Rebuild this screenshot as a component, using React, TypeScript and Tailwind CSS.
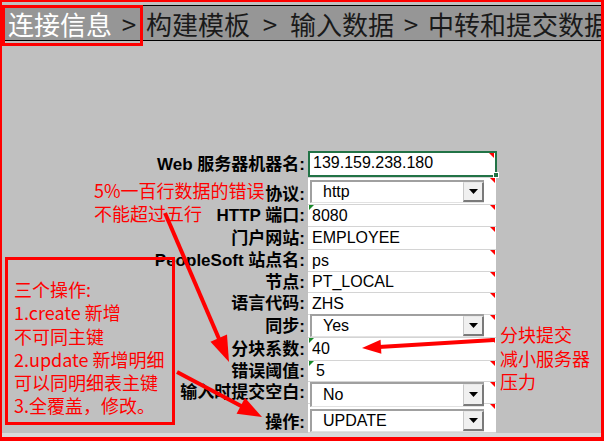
import React from 'react';

type Row = {
  label: string;
  h: string;
  value: string;
  kind?: 'web' | 'select';
  green?: boolean;
  labelPad?: string;
  valuePad?: string;
  sel?: string;
};

const rows: Row[] = [
  { label: 'Web 服务器机器名:', h: 'h-[27px]', value: '139.159.238.180', kind: 'web' },
  { label: '协议:', h: 'h-[27px]', value: 'http', kind: 'select', labelPad: 'pt-[7px]', sel: 'top-[2px] h-[23px]' },
  { label: 'HTTP 端口:', h: 'h-[22px]', value: '8080', green: true },
  { label: '门户网站:', h: 'h-[23px]', value: 'EMPLOYEE' },
  { label: 'PeopleSoft 站点名:', h: 'h-[22px]', value: 'ps' },
  { label: '节点:', h: 'h-[21px]', value: 'PT_LOCAL' },
  { label: '语言代码:', h: 'h-[22px]', value: 'ZHS' },
  { label: '同步:', h: 'h-[23px]', value: 'Yes', kind: 'select', sel: 'top-[-1px] h-[23px]' },
  { label: '分块系数:', h: 'h-[23px]', value: '40', green: true },
  { label: '错误阈值:', h: 'h-[21px]', value: '5', green: true, valuePad: 'pl-[8px]' },
  { label: '输入时提交空白:', h: 'h-[22px]', value: 'No', kind: 'select', sel: 'top-0 h-[25px]' },
  { label: '操作:', h: 'h-[29px]', value: 'UPDATE', kind: 'select', labelPad: 'pt-[8px]', sel: 'top-[5px] h-[23px]' },
];

const arrow = (x1: number, y1: number, x2: number, y2: number, len: number, half: number) => {
  const d = Math.hypot(x2 - x1, y2 - y1);
  const ux = (x2 - x1) / d;
  const uy = (y2 - y1) / d;
  const bx = x2 - ux * len;
  const by = y2 - uy * len;
  const nx = -uy * half;
  const ny = ux * half;
  return {
    line: { x1, y1, x2: bx + ux * 2, y2: by + uy * 2 },
    head: `${x2},${y2} ${bx + nx},${by + ny} ${bx - nx},${by - ny}`,
  };
};

const arrows = [
  arrow(165, 213, 229, 362, 26, 9),
  arrow(177, 372, 262, 417, 24, 9),
  arrow(494, 340, 362, 348, 19, 7),
];

const Select: React.FC<{ value: string; pos: string }> = ({ value, pos }) => (
  <div className={`absolute left-[2px] z-10 flex w-[174px] items-center border-t-2 border-l-2 border-b border-t-[#a0a0a0] border-l-[#a0a0a0] border-b-[#e2e2e2] bg-white ${pos}`}>
    <span className="flex-1 pl-[11px] text-[16px] leading-none text-black">{value}</span>
    <div className="flex h-full w-[21px] items-center justify-center border-t border-l border-r-2 border-b-2 border-t-[#e8e8e8] border-l-[#c8c8c8] border-r-[#7a7a7a] border-b-[#7a7a7a] bg-[#f0f0f0]">
      <svg width="9" height="5" viewBox="0 0 9 5">
        <polygon points="0,0 9,0 4.5,5" fill="#000" />
      </svg>
    </div>
  </div>
);

export default function App() {
  return (
    <div className="relative h-[441px] w-[604px] overflow-hidden bg-[#c0c0c0] font-['Liberation_Sans','Noto_Sans_CJK_SC',sans-serif]">
      {/* step header */}
      <div className="mt-[5px] flex h-[36px] items-center overflow-hidden whitespace-nowrap border-y border-black bg-[#969696] pl-[8px] pt-[2px] font-['Noto_Sans_CJK_SC',sans-serif] text-[26px] leading-none text-[#1a1a1a]">
        <span className="w-[104px] shrink-0 text-white">连接信息</span>
        <span className="w-[34px] shrink-0 text-center">&gt;</span>
        <span className="w-[104px] shrink-0">构建模板</span>
        <span className="w-[40px] shrink-0 text-center">&gt;</span>
        <span className="w-[104px] shrink-0">输入数据</span>
        <span className="w-[34px] shrink-0 text-center">&gt;</span>
        <span className="shrink-0">中转和提交数据</span>
      </div>

      {/* form */}
      <div className="mt-[110px] flex flex-col">
        {rows.map((r) => (
          <div key={r.label} className={`flex ${r.h}`}>
            <div className={`flex w-[308px] shrink-0 items-center justify-end pr-[3px] text-[17px] font-bold leading-[20px] text-black ${r.labelPad ?? ''}`}>
              {r.label}
            </div>
            <div className={`relative flex w-[188px] items-center border-b border-[#d4d4d4] bg-white text-[16px] leading-none text-black ${r.valuePad ?? 'pl-[4px]'}`}>
              {r.kind === 'select' ? (
                <Select value={r.value} pos={r.sel ?? ''} />
              ) : (
                <span className={r.kind === 'web' ? 'pl-[1px] pb-[2px]' : ''}>{r.value}</span>
              )}
              {r.kind === 'web' && (
                <>
                  <div className="absolute left-0 top-0 h-[26px] w-[189px] border-2 border-[#217346]" />
                  <div className="absolute left-[185px] top-[21px] h-[6px] w-[6px] border border-white bg-[#217346]" />
                </>
              )}
              {r.green && (
                <div className="absolute left-[1px] top-0 h-0 w-0 border-t-[5px] border-r-[5px] border-t-[#1a8a2a] border-r-transparent" />
              )}
              <div className={`absolute h-0 w-0 border-t-[5px] border-l-[5px] border-t-[#ff0000] border-l-transparent ${r.kind === 'web' ? 'right-[2px] top-[2px]' : 'right-[1px] top-0'}`} />
            </div>
          </div>
        ))}
      </div>
      <div className="h-[5px] bg-[#dadada]" />

      {/* annotations */}
      <div className="absolute left-[94px] top-[179px] font-['Noto_Sans_CJK_SC',sans-serif] text-[18px] leading-[23px] text-[#ff0000]">
        <div>5%一百行数据的错误</div>
        <div>不能超过五行</div>
      </div>

      <div className="absolute left-[5px] top-[257px] h-[168px] w-[170px] border-[3px] border-[#ff0000] pl-[6px] pt-[18px] font-['Noto_Sans_CJK_SC',sans-serif] text-[18px] leading-[23.3px] text-[#ff0000]">
        <div>三个操作:</div>
        <div>1.create 新增</div>
        <div>不可同主键</div>
        <div>2.update 新增明细</div>
        <div>可以同明细表主键</div>
        <div>3.全覆盖，修改。</div>
      </div>

      <div className="absolute left-[500px] top-[323px] font-['Noto_Sans_CJK_SC',sans-serif] text-[18px] leading-[23.5px] text-[#ff0000]">
        <div>分块提交</div>
        <div>减小服务器</div>
        <div>压力</div>
      </div>

      <svg className="pointer-events-none absolute left-0 top-0 z-20" width="604" height="441">
        {arrows.map((a, i) => (
          <g key={i}>
            <line {...a.line} stroke="#ff0000" strokeWidth="4" />
            <polygon points={a.head} fill="#ff0000" />
          </g>
        ))}
      </svg>

      {/* highlight box on current step */}
      <div className="pointer-events-none absolute left-[2px] top-[5px] h-[41px] w-[141px] border-[3px] border-[#ff0000]" />

      {/* outer frame */}
      <div className="pointer-events-none absolute inset-0 z-30 border-t-2 border-l-2 border-r-[3px] border-b-[4px] border-[#ff0000]" />
    </div>
  );
}
